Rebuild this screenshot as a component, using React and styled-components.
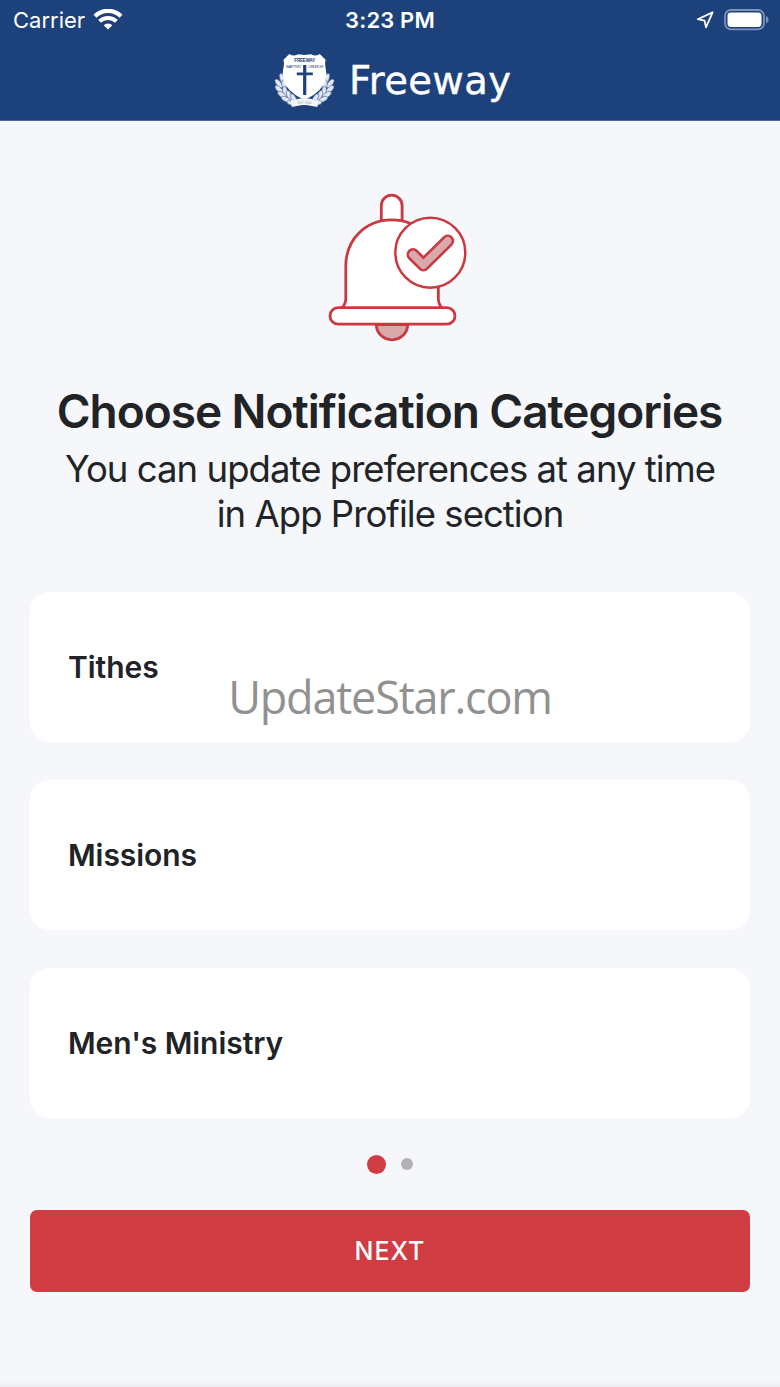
import styled, { createGlobalStyle } from "styled-components";

const GlobalStyle = createGlobalStyle`
  * {
    box-sizing: border-box;
    margin: 0;
    padding: 0;
  }

  body {
    background-color: #f5f7fb;
    font-family: Inter, "Liberation Sans", sans-serif;
    color: #212326;
  }
`;

const Screen = styled.div`
  position: relative;
  width: 780px;
  height: 1387px;
  overflow: hidden;
  display: flex;
  flex-direction: column;
  background-color: #f5f7fb;
`;

const Header = styled.header`
  height: 121px;
  background-color: #1d417b;
  border-bottom: 1px solid #4c6a97;
  color: #fff;
`;

const StatusBar = styled.div`
  height: 40px;
  padding: 0 11px 0 13px;
  display: grid;
  grid-template-columns: 1fr auto 1fr;
  align-items: center;
`;

const Carrier = styled.div`
  display: flex;
  align-items: center;
  gap: 8px;
  font-size: 22px;
`;

const Time = styled.p`
  margin-right: 2px;
  font-size: 22px;
  font-weight: 600;
  letter-spacing: 0.15px;
`;

const StatusIcons = styled.div`
  display: flex;
  align-items: center;
  justify-content: flex-end;
  gap: 10px;
`;

const Brand = styled.div`
  height: 80px;
  padding: 13px 0 0 274px;
  display: flex;
  align-items: flex-start;
  gap: 13px;
`;

const BrandName = styled.h1`
  font-family: "DejaVu Sans", sans-serif;
  font-size: 38.5px;
  line-height: 56px;
  font-weight: 400;
  letter-spacing: 0.4px;
  -webkit-text-stroke: 0.4px #fff;
`;

const Content = styled.main`
  padding: 59px 30px 0;
  display: flex;
  flex-direction: column;
  align-items: center;
`;

const Title = styled.h2`
  margin: 28px 1px 0 0;
  font-size: 46px;
  line-height: 56px;
  font-weight: 600;
  letter-spacing: -1.03px;
  white-space: nowrap;
`;

const SubTitle = styled.p`
  margin-top: 8px;
  font-size: 36.5px;
  line-height: 45px;
  letter-spacing: -0.95px;
  text-align: center;
  white-space: nowrap;
`;

const CategoryList = styled.ul`
  width: 100%;
  margin-top: 55px;
  display: flex;
  flex-direction: column;
  gap: 38px;
  list-style: none;
`;

const Category = styled.li`
  height: 150px;
  padding: 0 0 1px 38px;
  display: flex;
  align-items: center;
  border-radius: 20px;
  background-color: #fff;
  font-size: 30px;
  font-weight: 600;
  letter-spacing: -0.05px;
`;

const Dots = styled.div`
  height: 20px;
  margin-top: 36px;
  display: flex;
  align-items: center;
  gap: 15px;
`;

const Dot = styled.span`
  width: ${(props) => (props.$active ? 19 : 12)}px;
  height: ${(props) => (props.$active ? 19 : 12)}px;
  border-radius: 50%;
  background-color: ${(props) => (props.$active ? "#cf3d43" : "#b3b3b5")};
`;

const NextButton = styled.button`
  width: 100%;
  height: 82px;
  margin-top: 36px;
  border: none;
  border-radius: 7px;
  background-color: #cf3d43;
  color: #fff;
  font-family: inherit;
  font-size: 25px;
  font-weight: 500;
  letter-spacing: 1px;
`;

const BottomEdge = styled.div`
  height: 4px;
  margin-top: auto;
  background: linear-gradient(#f3f4f7, #ebebed);
`;

const Watermark = styled.p`
  position: absolute;
  top: 666px;
  left: 0;
  width: 100%;
  text-align: center;
  font-family: "Open Sans", sans-serif;
  font-size: 45px;
  line-height: 61px;
  letter-spacing: -1.2px;
  color: #919191;
`;

function WifiIcon() {
  return (
    <svg width="30" height="22" viewBox="0 0 30 22">
      <path
        d="M2 7.2 A18.4 18.4 0 0 1 28 7.2"
        fill="none"
        stroke="#fff"
        strokeWidth="4.2"
      />
      <path
        d="M6.6 12.4 A11.8 11.8 0 0 1 23.4 12.4"
        fill="none"
        stroke="#fff"
        strokeWidth="4"
      />
      <path d="M15 20.6 L10.7 16.2 A6.1 6.1 0 0 1 19.3 16.2 Z" fill="#fff" />
    </svg>
  );
}

function LocationIcon() {
  return (
    <svg width="18" height="18" viewBox="0 0 18 18">
      <path
        d="M16.6 1.4 L1.7 8.2 L8.6 9.6 L10 16.3 Z"
        fill="none"
        stroke="#fff"
        strokeWidth="1.8"
        strokeLinejoin="round"
      />
    </svg>
  );
}

function BatteryIcon() {
  return (
    <svg width="45" height="22" viewBox="0 0 45 22">
      <rect
        x="1"
        y="1"
        width="39"
        height="19.4"
        rx="6"
        fill="none"
        stroke="#7b93b9"
        strokeWidth="1.8"
      />
      <rect x="3.5" y="3.4" width="34" height="14.6" rx="3.4" fill="#fff" />
      <path d="M42 6.8 Q44.6 8.4 44.6 10.7 Q44.6 13 42 14.6 Z" fill="#7b93b9" />
    </svg>
  );
}

// Leaves of the right branch, mirrored for the left one
const LEAVES = [
  [53, 26, 18],
  [56.5, 31, 38],
  [51, 32.5, 8],
  [56, 37, 45],
  [50, 39, 12],
  [53, 42.5, 55],
  [46, 43, 20],
  [49, 47, 65],
  [41.5, 46, 30],
  [43, 50.5, 80],
];

function Branch() {
  return (
    <g>
      {LEAVES.map(([x, y, angle]) => (
        <ellipse
          key={`${x}-${y}`}
          cx={x}
          cy={y}
          rx="2.3"
          ry="5.2"
          transform={`rotate(${angle} ${x} ${y})`}
          fill="#e0e7f2"
          stroke="#4c6a9c"
          strokeWidth="0.6"
        />
      ))}
    </g>
  );
}

function Logo() {
  return (
    <svg width="62" height="56" viewBox="0.2 0.5 62 56">
      <Branch />
      <g transform="matrix(-1 0 0 1 61.4 0)">
        <Branch />
      </g>
      <path
        d="M15.5 1.4 Q20 4.2 24.5 1.8 L30.7 2.6 L37 1.8 Q41.5 4.2 46 1.4 L52 7.4
          C50 11 53 17 52.5 23 C51.5 34 42.5 42.5 30.7 47
          C19 42.5 9.8 34 9 23 C8.5 17 11.5 11 9.5 7.4 Z"
        fill="#fff"
      />
      <path
        d="M17 47 Q22 49 23.5 46.5 Q30.7 45 38 46.5 Q40 49 45 47 L43.5 54.5 L38 53.5 Q30.7 51.5 23 53.5 L18 54.5 Z"
        fill="#f5f7fb"
      />
      <path
        d="M29.3 12.4 H32.5 V20 H39 V22.8 H32.5 V42.4 H29.3 V22.8 H23 V20 H29.3 Z"
        fill="#1d417b"
      />
      <g
        fill="#1d417b"
        fontFamily="Liberation Sans, sans-serif"
        textAnchor="middle"
      >
        <text x="31" y="9.6" fontSize="4.6" fontWeight="700" textLength="21">
          FREEWAY
        </text>
        <text x="20" y="15.8" fontSize="4" textLength="15">
          BAPTIST
        </text>
        <text x="41.8" y="15.8" fontSize="4" textLength="15">
          CHURCH
        </text>
        <text x="30.7" y="51" fontSize="3" opacity="0.5">
          EST. 1956
        </text>
      </g>
    </svg>
  );
}

function BellIcon() {
  return (
    <svg width="160" height="175" viewBox="0 0 160 175">
      <g stroke="#c9393f" strokeWidth="2.8" fill="#fff">
        <path d="M71.3 42 V25.5 A10.4 10.4 0 0 1 92.1 25.5 V42" />
        <path
          d="M32 128 Q35.8 124 35.8 118 V86 C35.8 60 55 39.8 81.7 39.8
            C108 39.8 128.3 60 128.3 86 V118 Q128.3 124 132 128"
        />
        <path d="M66.3 144.5 A15.6 15.2 0 0 0 97.7 144.5 Z" fill="#d9a9ac" />
        <rect x="20" y="127.6" width="125" height="16.6" rx="8.3" />
        <circle cx="120.3" cy="72.7" r="35" strokeWidth="2.5" />
      </g>
      <path
        d="M103 74.6 L113.4 85 L137.7 61"
        fill="none"
        stroke="#c9393f"
        strokeWidth="13"
        strokeLinecap="round"
        strokeLinejoin="round"
      />
      <path
        d="M103 74.6 L113.4 85 L137.7 61"
        fill="none"
        stroke="#d9a9ac"
        strokeWidth="7.8"
        strokeLinecap="round"
        strokeLinejoin="round"
      />
    </svg>
  );
}

const categories = ["Tithes", "Missions", "Men's Ministry"];

function App() {
  return (
    <>
      <GlobalStyle />
      <Screen>
        <Header>
          <StatusBar>
            <Carrier>
              <span>Carrier</span>
              <WifiIcon />
            </Carrier>
            <Time>3:23 PM</Time>
            <StatusIcons>
              <LocationIcon />
              <BatteryIcon />
            </StatusIcons>
          </StatusBar>
          <Brand>
            <Logo />
            <BrandName>Freeway</BrandName>
          </Brand>
        </Header>

        <Content>
          <BellIcon />
          <Title>Choose Notification Categories</Title>
          <SubTitle>
            You can update preferences at any time
            <br />
            in App Profile section
          </SubTitle>

          <CategoryList>
            {categories.map((category) => (
              <Category key={category}>{category}</Category>
            ))}
          </CategoryList>

          <Dots>
            <Dot $active />
            <Dot />
          </Dots>
          <NextButton>NEXT</NextButton>
        </Content>

        <BottomEdge />
        <Watermark>UpdateStar.com</Watermark>
      </Screen>
    </>
  );
}

export default App;
